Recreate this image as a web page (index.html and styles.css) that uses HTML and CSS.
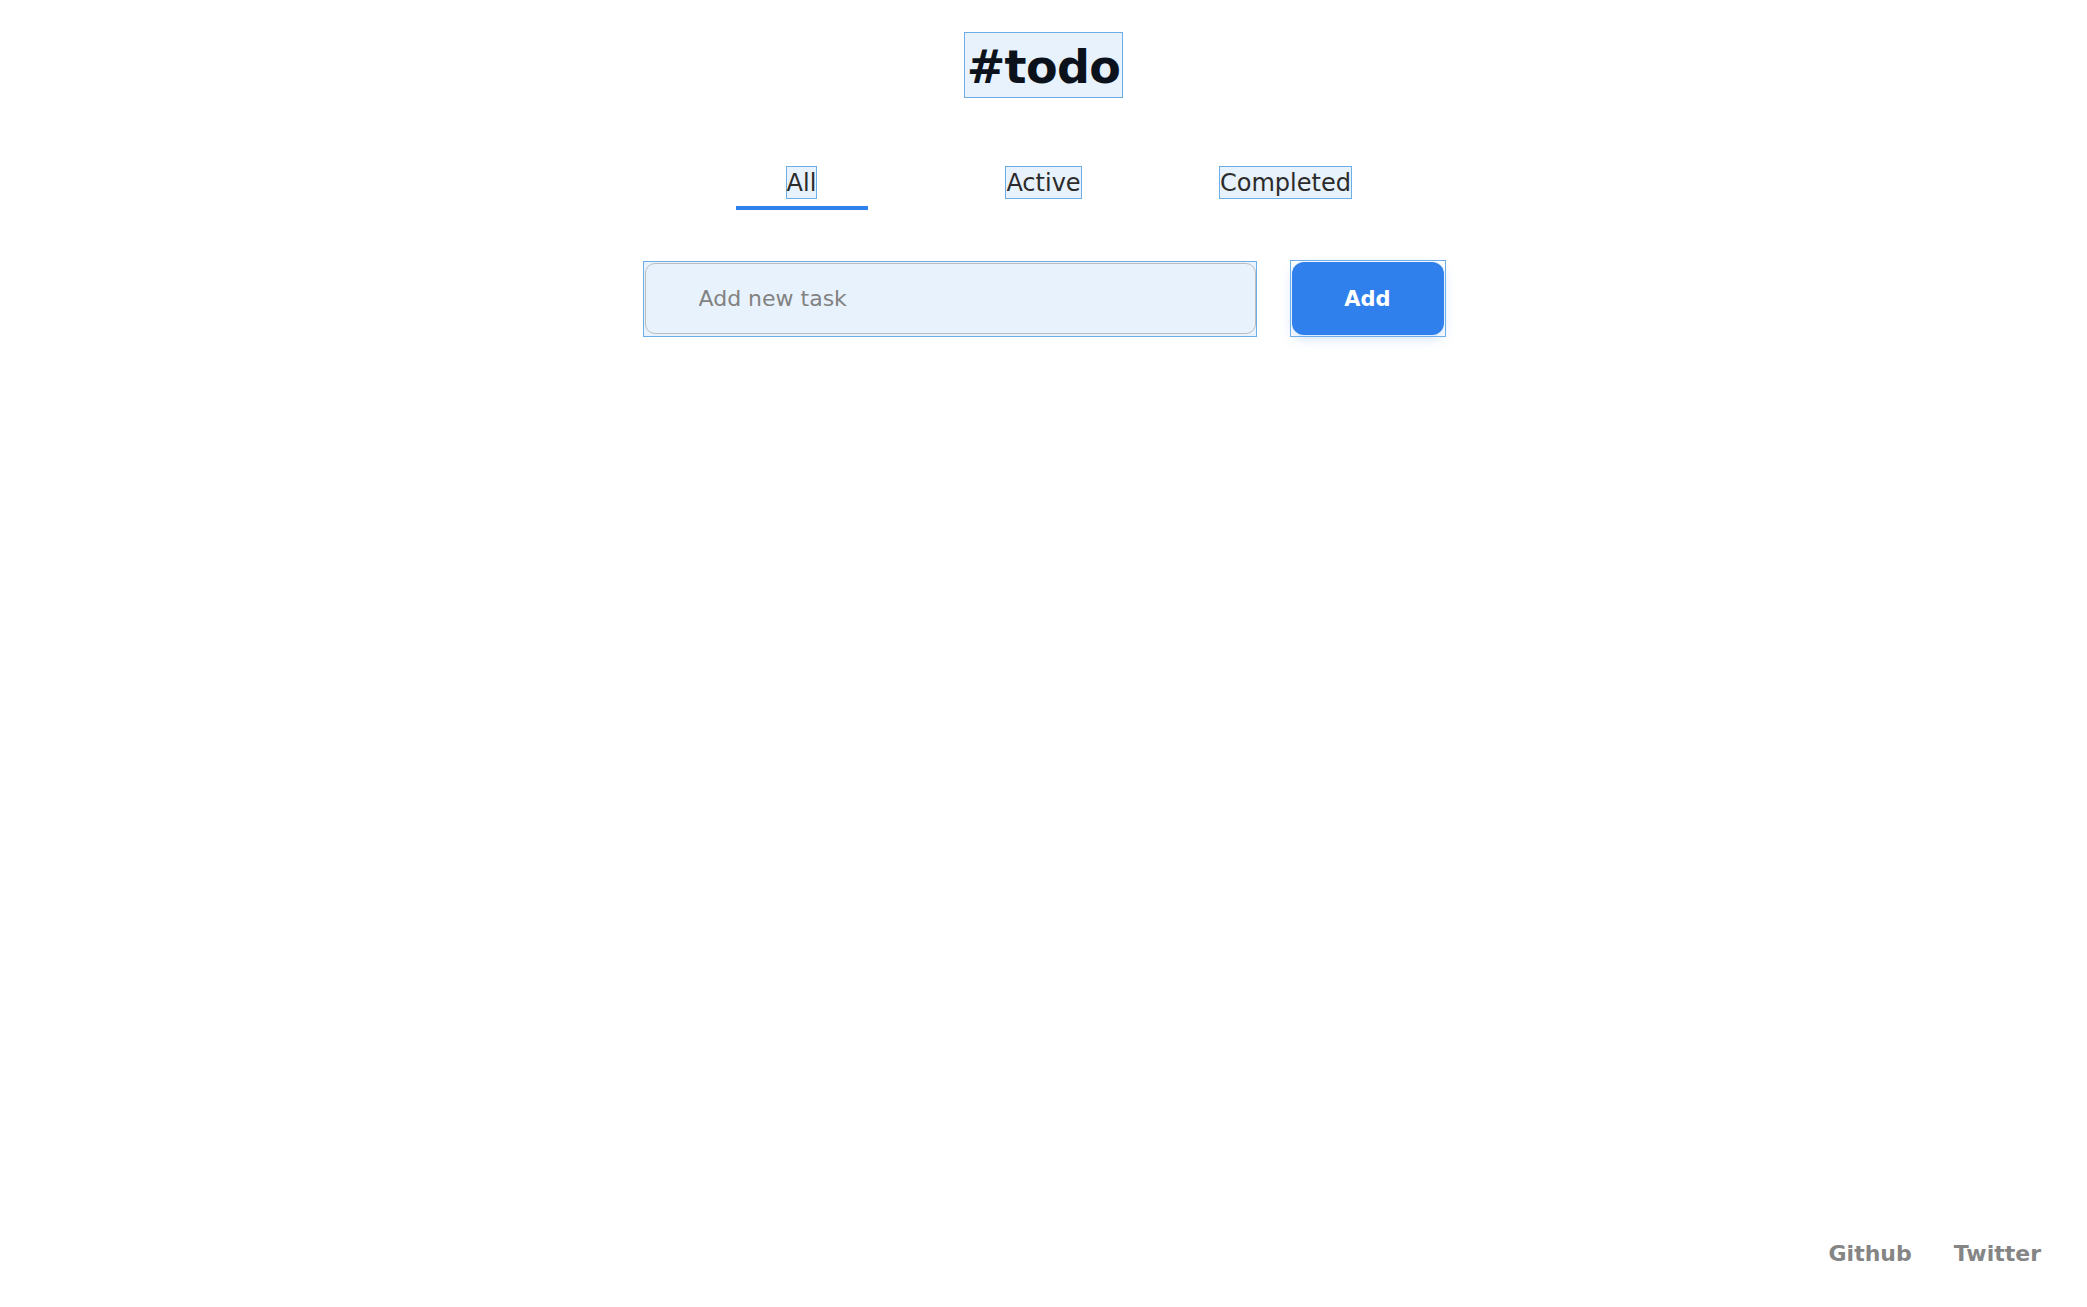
FILE: index.html
```html
<!DOCTYPE html>
<html lang="en">
<head>
<meta charset="utf-8">
<title>#todo</title>
<link rel="stylesheet" href="styles.css">
</head>
<body>
<div class="page">
  <header class="header">
    <h1 class="title"><span class="hl title-text">#todo</span></h1>
  </header>
  <nav class="tabs">
    <div class="tab tab-active"><span class="hl tab-label">All</span></div>
    <div class="tab"><span class="hl tab-label">Active</span></div>
    <div class="tab"><span class="hl tab-label">Completed</span></div>
  </nav>
  <form class="add-form" onsubmit="return false;">
    <div class="hl-box input-wrap">
      <input class="task-input" type="text" placeholder="Add new task">
    </div>
    <div class="hl-box btn-wrap">
      <button class="add-btn" type="submit">Add</button>
    </div>
  </form>
  <main class="list"></main>
  <footer class="footer">
    <a class="footer-link" href="#">Github</a>
    <a class="footer-link" href="#">Twitter</a>
  </footer>
</div>
</body>
</html>
```

FILE: styles.css
```css
* { box-sizing: border-box; }

html, body {
  margin: 0;
  padding: 0;
  background: #ffffff;
}

body {
  font-family: "DejaVu Sans", "Liberation Sans", sans-serif;
  color: #333333;
}

.page {
  min-height: 100vh;
  display: flex;
  flex-direction: column;
  align-items: center;
}

.header {
  padding-top: 32px;
  display: flex;
  justify-content: center;
}

.title {
  margin: 0;
  font-size: 46px;
  font-weight: 700;
  line-height: 0;
}

.hl {
  display: inline-block;
  background: #e8f2fc;
  border: 1px solid #6eaee6;
}

.title-text {
  color: #0b121b;
  padding: 6px 2px 0;
  line-height: 57px;
  height: 66px;
  letter-spacing: -0.6px;
}

.tabs {
  margin-top: 68px;
  display: flex;
  justify-content: center;
  gap: 110px;
}

.tab {
  width: 132px;
  display: flex;
  justify-content: center;
  padding-bottom: 7px;
  border-bottom: 4px solid transparent;
  border-radius: 2px 2px 0 0;
}

.tab-active {
  border-bottom-color: #2f80ed;
}

.tab-label {
  font-size: 24px;
  line-height: 29px;
  padding-top: 2px;
  height: 33px;
  color: #2b2b2b;
  white-space: nowrap;
}

.add-form {
  margin-top: 50px;
  display: flex;
  align-items: center;
  gap: 33px;
  margin-left: 1px;
}

.hl-box {
  border: 1px solid #6eaee6;
  background: #e8f2fc;
}

.input-wrap {
  padding: 1px 0 2px 1px;
}

.task-input {
  display: block;
  width: 611px;
  height: 71px;
  border: 1px solid #bdbdbd;
  border-radius: 10px;
  background: #e8f2fc;
  padding: 0 0 0 53px;
  font-family: "DejaVu Sans", "Liberation Sans", sans-serif;
  font-size: 22px;
  color: #333333;
  outline: none;
}

.task-input::placeholder {
  color: #828282;
}

.btn-wrap {
  padding: 1px;
  background: #ffffff;
}

.add-btn {
  display: block;
  width: 152px;
  height: 73px;
  border: none;
  border-radius: 12px;
  background: #2f80ed;
  color: #ffffff;
  font-family: "DejaVu Sans", "Liberation Sans", sans-serif;
  font-size: 21px;
  font-weight: 700;
  box-shadow: 0 4px 12px rgba(127, 177, 243, 0.35);
  cursor: pointer;
}

.list {
  flex: 1;
}

.footer {
  align-self: stretch;
  display: flex;
  justify-content: flex-end;
  gap: 42px;
  padding: 0 46px 40px 0;
}

.footer-link {
  font-size: 22px;
  font-weight: 700;
  color: #858585;
  text-decoration: none;
  line-height: 26px;
}
```
